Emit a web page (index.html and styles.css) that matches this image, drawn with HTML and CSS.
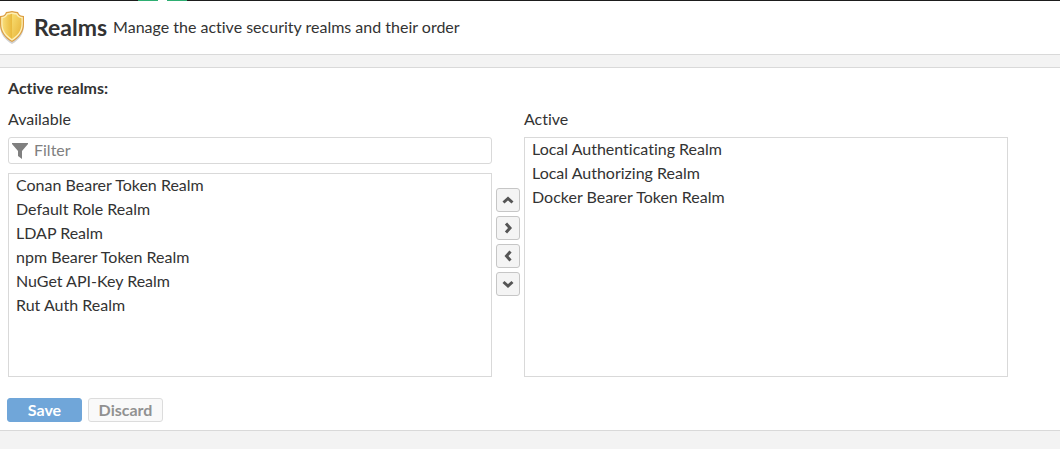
FILE: index.html
```html
<!DOCTYPE html>
<html lang="en">
<head>
<meta charset="utf-8">
<title>Realms</title>
<link rel="stylesheet" href="styles.css">
</head>
<body>
<div class="topbar"><span class="mark"></span><span class="mark-gap"></span><span class="mark"></span></div>
<header class="page-header">
  <svg class="shield" viewBox="0 0 26 34" aria-hidden="true">
    <defs>
      <linearGradient id="gold-light" x1="0" y1="0" x2="1" y2="0"><stop offset="0" stop-color="#f8dc78"/><stop offset="1" stop-color="#e9b93c"/></linearGradient>
      <linearGradient id="gold-dark" x1="0" y1="0" x2="1" y2="1"><stop offset="0" stop-color="#f9dd70"/><stop offset="1" stop-color="#e5b136"/></linearGradient>
    </defs>
    <path d="M12 33C5 29 0 23 0 14V7C3 7 5 5 6 3C9 3 11 2 12 2C13 2 15 3 18 3C19 5 21 7 24 7V14C24 23 19 29 12 33Z" fill="#999" opacity=".45"/>
    <path d="M12 31C5 27 0 21 0 13V5C3 5 5 4 6 1C9 1 10 0 12 0C14 0 15 1 18 1C19 4 21 5 24 5V13C24 21 19 27 12 31Z" fill="#dc9d40"/>
    <path d="M12 29.700C5.500 26 1.200 20.500 1.200 13V6C4 5.800 6 4.500 6.800 2.200C9 2.200 10.500 1.200 12 1.200C13.500 1.200 15 2.200 17.200 2.200C18 4.500 20 5.800 22.800 6V13C22.800 20.500 18.500 26 12 29.700Z" fill="#fdf0b8"/>
    <path d="M12 28C6.500 24.500 2.500 19.500 2.500 13V7.200C5 6.800 7 5.500 7.800 3.500C9.500 3.500 11 2.700 12 2.700V28Z" fill="url(#gold-light)"/>
    <path d="M12 28C17.500 24.500 21.500 19.500 21.500 13V7.200C19 6.800 17 5.500 16.200 3.500C14.500 3.500 13 2.700 12 2.700V28Z" fill="url(#gold-dark)"/>
  </svg>
  <h1 class="title">Realms</h1>
  <p class="subtitle">Manage the active security realms and their order</p>
</header>
<main class="panel">
  <h2 class="field-title">Active realms:</h2>
  <div class="selector">
    <div class="column">
      <label class="column-label" for="available">Available</label>
      <div class="filter">
        <svg class="funnel" viewBox="0 0 16 16" aria-hidden="true"><path d="M0 0H16V1L10 8V16L6 13V8L0 1Z" fill="#808080"/></svg>
        <input class="filter-input" type="text" placeholder="Filter" aria-label="Filter">
      </div>
      <select class="list" id="available" multiple>
        <option>Conan Bearer Token Realm</option>
        <option>Default Role Realm</option>
        <option>LDAP Realm</option>
        <option>npm Bearer Token Realm</option>
        <option>NuGet API-Key Realm</option>
        <option>Rut Auth Realm</option>
      </select>
    </div>
    <div class="movers">
      <button class="mover" type="button" aria-label="Move up"><svg class="chevron" viewBox="0 0 12 12"><path d="M1.500 8.500L6 4.500L10.500 8.500"/></svg></button>
      <button class="mover" type="button" aria-label="Add to active"><svg class="chevron" viewBox="0 0 12 12"><path d="M4 1.500L8 6L4 10.500"/></svg></button>
      <button class="mover" type="button" aria-label="Remove from active"><svg class="chevron" viewBox="0 0 12 12"><path d="M8.500 1.500L4.500 6L8.500 10.500"/></svg></button>
      <button class="mover" type="button" aria-label="Move down"><svg class="chevron" viewBox="0 0 12 12"><path d="M1.500 4L6 8L10.500 4"/></svg></button>
    </div>
    <div class="column">
      <label class="column-label" for="active">Active</label>
      <select class="list" id="active" multiple>
        <option>Local Authenticating Realm</option>
        <option>Local Authorizing Realm</option>
        <option>Docker Bearer Token Realm</option>
      </select>
    </div>
  </div>
  <div class="actions">
    <button class="button button-primary" type="button">Save</button>
    <button class="button button-plain" type="button">Discard</button>
  </div>
</main>
</body>
</html>
```
FILE: styles.css
```css
* { box-sizing: border-box; }
body {
  margin: 0;
  background: #f3f3f3;
  color: #333;
  font: 16px/24px Lato, "Open Sans", sans-serif;
  font-variant-ligatures: none;
}
h1, h2, p { margin: 0; }
button, input, select { font: inherit; font-variant-ligatures: none; color: inherit; }

.topbar {
  display: flex;
  height: 1px;
  padding-left: 138px;
  background: #1d1d1d;
}
.mark { width: 20px; background: #2eae72; }
.mark-gap { width: 9px; background: #fff; }

.page-header {
  display: flex;
  align-items: center;
  height: 54px;
  background: #fff;
  border-bottom: 1px solid #d9d9d9;
}
.shield { width: 26px; height: 34px; margin-right: 8px; }
.title { margin-right: 6px; padding-bottom: 2px; font-size: 23px; font-weight: 700; }
.subtitle { padding-bottom: 2px; }

.panel {
  margin-top: 12px;
  padding: 8px 8px 8px;
  background: #fff;
  border: solid #d9d9d9;
  border-width: 1px 0;
}
.field-title { margin-bottom: 7px; font-size: 16px; font-weight: 700; }
.selector { display: flex; max-width: 1000px; }
.column { display: flex; flex: 1; flex-direction: column; min-width: 0; }
.column-label { margin-bottom: 6px; }
.filter {
  display: flex;
  align-items: center;
  height: 27px;
  margin-bottom: 9px;
  padding: 0 3px;
  border: 1px solid #d9d9d9;
  border-radius: 3px;
}
.funnel { width: 16px; height: 16px; }
.filter-input {
  flex: 1;
  min-width: 0;
  padding: 0 6px 2px;
  border: 0;
  outline: 0;
  background: transparent;
}
.filter-input::placeholder { color: #808080; opacity: 1; }
.list {
  flex: 1;
  width: 100%;
  min-height: 204px;
  padding: 0;
  border: 1px solid #d9d9d9;
  border-radius: 0;
  outline: 0;
  background: #fff;
  overflow: auto;
}
.list option { padding: 1px 7px 4px; }

.movers {
  display: flex;
  flex-direction: column;
  gap: 4px;
  padding: 81px 4px 0;
}
.mover {
  display: grid;
  place-items: center;
  width: 24px;
  height: 24px;
  padding: 0;
  border: 1px solid #c6c6c6;
  border-radius: 3px;
  background: #f4f4f4;
}
.chevron {
  width: 12px;
  height: 12px;
  fill: none;
  stroke: #555;
  stroke-width: 3;
}

.actions { display: flex; gap: 6px; margin: 21px 0 0 -1px; }
.button {
  width: 75px;
  height: 24px;
  padding: 0 0 1px;
  border: 1px solid;
  border-radius: 3px;
  font-weight: 700;
  line-height: 21px;
}
.button-primary { border-color: #70a6d9; background: #70a6d9; color: #fff; }
.button-plain { border-color: #dcdcdc; background: #f9f9f9; color: #919191; }
```
